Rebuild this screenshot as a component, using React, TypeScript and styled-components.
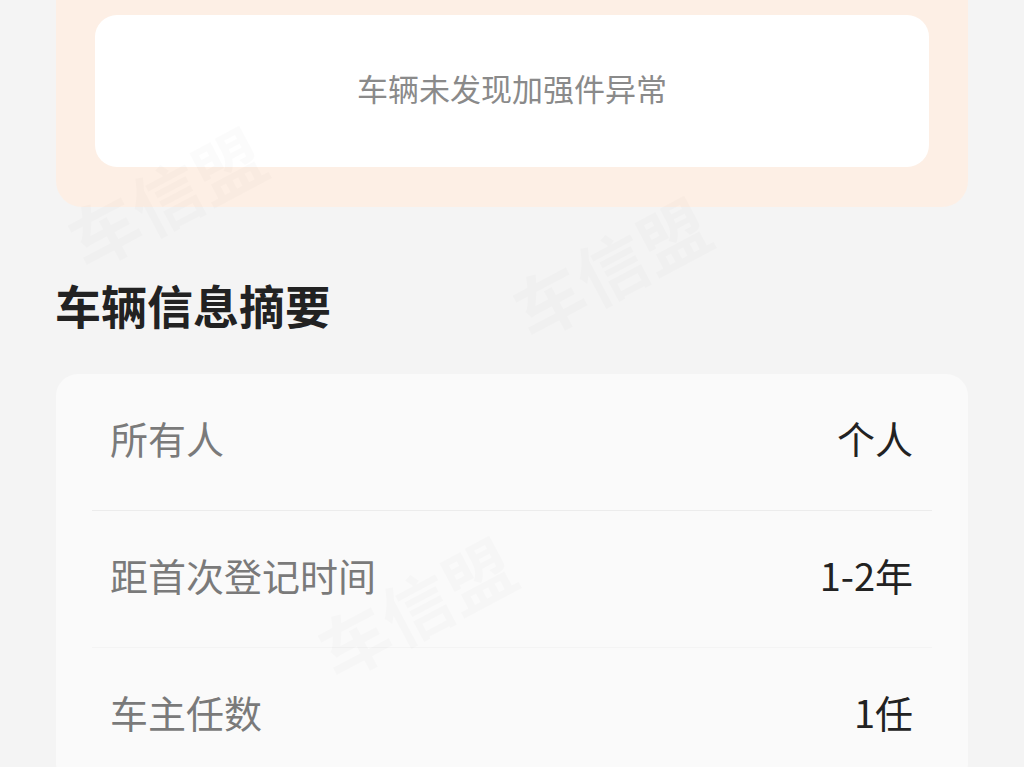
import React from "react";
import styled, { createGlobalStyle } from "styled-components";

const GlobalStyle = createGlobalStyle`
  html, body {
    margin: 0;
    padding: 0;
    background: #f4f4f4;
  }
  body {
    font-family: "Noto Sans CJK SC", "Noto Sans", sans-serif;
    overflow: hidden;
  }
`;

const Page = styled.div`
  position: relative;
  width: 1024px;
  height: 767px;
  overflow: hidden;
  background: #f4f4f4;
  padding: 0 56px;
  box-sizing: border-box;
  display: flex;
  flex-direction: column;
`;

const AlertCard = styled.div`
  background: #fdefe5;
  padding: 15px 39px 40px;
  border-radius: 0 0 26px 26px;
`;

const AlertInner = styled.div`
  height: 152px;
  box-sizing: border-box;
  padding-bottom: 8px;
  background: #ffffff;
  border-radius: 22px;
  display: flex;
  align-items: center;
  justify-content: center;
  font-size: 31px;
  line-height: 1;
  color: #8a8a8a;
`;

const Heading = styled.h2`
  margin: 74px 0 0 -1px;
  font-size: 46px;
  line-height: 46px;
  font-weight: 700;
  color: #222222;
`;

const SummaryCard = styled.div`
  margin-top: 47px;
  background: #fafafa;
  border-radius: 22px;
  padding: 0 36px;
  display: flex;
  flex-direction: column;
`;

const Row = styled.div<{ $divider: "strong" | "faint" | "none" }>`
  height: 137px;
  box-sizing: border-box;
  padding: 0 19px 9px 18px;
  display: flex;
  align-items: center;
  justify-content: space-between;
  border-bottom: ${(p) =>
    p.$divider === "strong"
      ? "1.5px solid #ececec"
      : p.$divider === "faint"
      ? "1px solid #f4f4f4"
      : "none"};
`;

const Label = styled.span`
  font-size: 38px;
  line-height: 1;
  color: #7a7a7a;
`;

const Value = styled.span`
  font-size: 38px;
  line-height: 1;
  color: #222222;
`;

const Watermark = styled.div<{ $x: number; $y: number }>`
  position: absolute;
  left: ${(p) => p.$x}px;
  top: ${(p) => p.$y}px;
  transform: rotate(-28deg);
  font-size: 70px;
  font-weight: 700;
  color: rgba(0, 0, 0, 0.016);
  pointer-events: none;
  white-space: nowrap;
`;

const rows: { label: string; value: string; divider: "strong" | "faint" | "none" }[] = [
  { label: "所有人", value: "个人", divider: "strong" },
  { label: "距首次登记时间", value: "1-2年", divider: "faint" },
  { label: "车主任数", value: "1任", divider: "none" },
];

export default function App() {
  return (
    <>
      <GlobalStyle />
      <Page>
        <AlertCard>
          <AlertInner>车辆未发现加强件异常</AlertInner>
        </AlertCard>
        <Heading>车辆信息摘要</Heading>
        <SummaryCard>
          {rows.map((r) => (
            <Row key={r.label} $divider={r.divider}>
              <Label>{r.label}</Label>
              <Value>{r.value}</Value>
            </Row>
          ))}
        </SummaryCard>
        <Watermark $x={505} $y={215}>车信盟</Watermark>
        <Watermark $x={310} $y={555}>车信盟</Watermark>
        <Watermark $x={60} $y={145}>车信盟</Watermark>
      </Page>
    </>
  );
}
